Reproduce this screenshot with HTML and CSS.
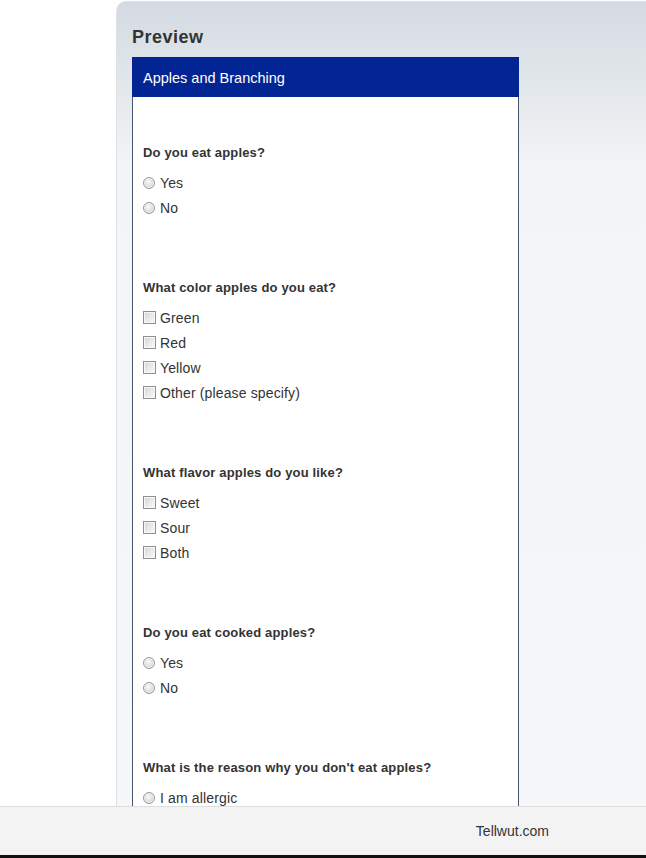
FILE: index.html
```html
<!DOCTYPE html>
<html lang="en">
<head>
<meta charset="utf-8">
<title>Preview</title>
<link rel="stylesheet" href="styles.css">
</head>
<body>
<main class="main">
  <section class="panel">
    <h1 class="title">Preview</h1>
    <div class="survey">
      <div class="survey-head">Apples and Branching</div>
      <div class="survey-body">
        <div class="question">
          <p class="q-label">Do you eat apples?</p>
          <label class="opt"><input type="radio" name="q1" class="radio">Yes</label>
          <label class="opt"><input type="radio" name="q1" class="radio">No</label>
        </div>
        <div class="question">
          <p class="q-label">What color apples do you eat?</p>
          <label class="opt"><input type="checkbox" class="check">Green</label>
          <label class="opt"><input type="checkbox" class="check">Red</label>
          <label class="opt"><input type="checkbox" class="check">Yellow</label>
          <label class="opt"><input type="checkbox" class="check">Other (please specify)</label>
        </div>
        <div class="question">
          <p class="q-label">What flavor apples do you like?</p>
          <label class="opt"><input type="checkbox" class="check">Sweet</label>
          <label class="opt"><input type="checkbox" class="check">Sour</label>
          <label class="opt"><input type="checkbox" class="check">Both</label>
        </div>
        <div class="question">
          <p class="q-label">Do you eat cooked apples?</p>
          <label class="opt"><input type="radio" name="q4" class="radio">Yes</label>
          <label class="opt"><input type="radio" name="q4" class="radio">No</label>
        </div>
        <div class="question">
          <p class="q-label">What is the reason why you don't eat apples?</p>
          <label class="opt"><input type="radio" name="q5" class="radio">I am allergic</label>
        </div>
      </div>
    </div>
  </section>
</main>
<footer class="footer">Tellwut.com</footer>
<div class="bottom-bar"></div>
</body>
</html>
```
FILE: styles.css
```css
html, body {
  margin: 0;
  padding: 0;
}
body {
  height: 858px;
  display: flex;
  flex-direction: column;
  background: #ffffff;
  font-family: "Liberation Sans", Arial, sans-serif;
  color: #333333;
  overflow: hidden;
}
.main {
  flex: 1;
  min-height: 0;
  overflow: hidden;
  padding: 1px 0 0 116px;
}
.panel {
  min-height: 100%;
  box-sizing: border-box;
  border-left: 1px solid #dde2e7;
  border-top: 1px solid #dde2e7;
  border-top-left-radius: 10px;
  background: linear-gradient(#d3dae1 0px, #e2e7eb 80px, #f2f4f6 160px, #f6f7f9 100%);
  padding: 24px 0 0 15px;
}
.title {
  margin: 0 0 9px;
  font-size: 18px;
  line-height: 22px;
  font-weight: bold;
  letter-spacing: 0.5px;
  color: #333333;
}
.survey {
  width: 385px;
  border: 1px solid #48546e;
  border-top: none;
  background: #ffffff;
}
.survey-head {
  height: 40px;
  line-height: 42px;
  margin: 0 -1px;
  padding-left: 11px;
  background: #032593;
  color: #ffffff;
  font-size: 14.5px;
  overflow: hidden;
}
.survey-body {
  padding: 46px 10px 0;
}
.question {
  margin-bottom: 58px;
}
.q-label {
  margin: 0 0 7px;
  font-size: 13px;
  line-height: 20px;
  font-weight: bold;
  letter-spacing: 0.16px;
  color: #333333;
}
.opt {
  display: flex;
  align-items: center;
  height: 25px;
  font-size: 14px;
  letter-spacing: 0.14px;
  color: #333333;
}
.radio {
  appearance: none;
  -webkit-appearance: none;
  margin: 0 5px 0 0;
  width: 12px;
  height: 12px;
  border-radius: 50%;
  border: 1px solid #9a9a9a;
  box-sizing: border-box;
  background: radial-gradient(circle at 45% 40%, #fafafa 0, #e2e2e2 45%, #c8c8c8 100%);
  box-shadow: inset 0 0 0 1px #f4f4f4;
}
.check {
  appearance: none;
  -webkit-appearance: none;
  margin: 0 4px 0 0;
  width: 13px;
  height: 13px;
  border: 1px solid #8e8f8f;
  box-sizing: border-box;
  background: linear-gradient(135deg, #d6d6d6 0%, #ececec 60%, #fafafa 100%);
  box-shadow: inset 0 0 0 1px #f7f7f7;
}
.footer {
  height: 48px;
  line-height: 48px;
  border-top: 1px solid #dedede;
  background: #f3f3f3;
  text-align: right;
  padding-right: 97px;
  font-size: 14px;
  color: #333333;
}
.bottom-bar {
  height: 3px;
  background: #111111;
}
```
